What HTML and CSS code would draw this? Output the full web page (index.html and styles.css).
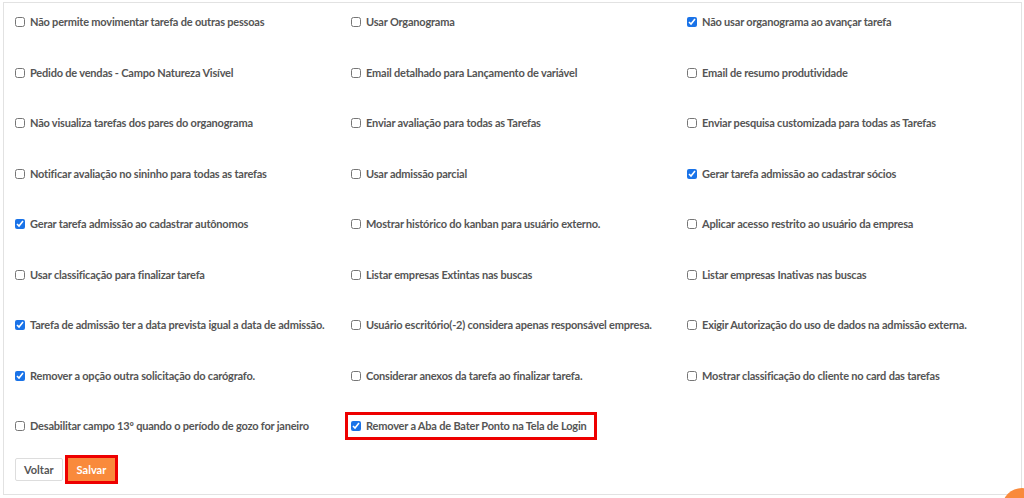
FILE: index.html
```html
<!DOCTYPE html>
<html lang="pt-BR">
<head>
    <meta charset="UTF-8">
    <meta name="viewport" content="width=device-width, initial-scale=1.0">
    <title>Configurações</title>
    <link rel="stylesheet" href="styles.css">
</head>
<body>

    <div class="panel">
        <div class="options">
            <label class="option"><input type="checkbox"> Não permite movimentar tarefa de outras pessoas</label>
            <label class="option"><input type="checkbox"> Usar Organograma</label>
            <label class="option"><input type="checkbox" checked> Não usar organograma ao avançar tarefa</label>

            <label class="option"><input type="checkbox"> Pedido de vendas - Campo Natureza Visível</label>
            <label class="option"><input type="checkbox"> Email detalhado para Lançamento de variável</label>
            <label class="option"><input type="checkbox"> Email de resumo produtividade</label>

            <label class="option"><input type="checkbox"> Não visualiza tarefas dos pares do organograma</label>
            <label class="option"><input type="checkbox"> Enviar avaliação para todas as Tarefas</label>
            <label class="option"><input type="checkbox"> Enviar pesquisa customizada para todas as Tarefas</label>

            <label class="option"><input type="checkbox"> Notificar avaliação no sininho para todas as tarefas</label>
            <label class="option"><input type="checkbox"> Usar admissão parcial</label>
            <label class="option"><input type="checkbox" checked> Gerar tarefa admissão ao cadastrar sócios</label>

            <label class="option"><input type="checkbox" checked> Gerar tarefa admissão ao cadastrar autônomos</label>
            <label class="option"><input type="checkbox"> Mostrar histórico do kanban para usuário externo.</label>
            <label class="option"><input type="checkbox"> Aplicar acesso restrito ao usuário da empresa</label>

            <label class="option"><input type="checkbox"> Usar classificação para finalizar tarefa</label>
            <label class="option"><input type="checkbox"> Listar empresas Extintas nas buscas</label>
            <label class="option"><input type="checkbox"> Listar empresas Inativas nas buscas</label>

            <label class="option"><input type="checkbox" checked> Tarefa de admissão ter a data prevista igual a data de admissão.</label>
            <label class="option"><input type="checkbox"> Usuário escritório(-2) considera apenas responsável empresa.</label>
            <label class="option"><input type="checkbox"> Exigir Autorização do uso de dados na admissão externa.</label>

            <label class="option"><input type="checkbox" checked> Remover a opção outra solicitação do carógrafo.</label>
            <label class="option"><input type="checkbox"> Considerar anexos da tarefa ao finalizar tarefa.</label>
            <label class="option"><input type="checkbox"> Mostrar classificação do cliente no card das tarefas</label>

            <label class="option"><input type="checkbox"> Desabilitar campo 13º quando o período de gozo for janeiro</label>
            <div class="option"><label class="highlight"><input type="checkbox" checked> Remover a Aba de Bater Ponto na Tela de Login</label></div>
        </div>

        <div class="actions">
            <button type="button" class="btn">Voltar</button>
            <button type="button" class="btn btn-save">Salvar</button>
        </div>
    </div>

    <div class="fab"></div>

</body>
</html>
```

FILE: styles.css
```css
body {
    margin: 0;
    background-color: #ffffff;
    font-family: Lato, sans-serif;
    overflow: hidden;
}

.panel {
    margin: 2px 2px 0 3px;
    height: 493px;
    box-sizing: border-box;
    border: 1px solid #e2e2e2;
    padding: 0 11px;
}

.options {
    display: grid;
    grid-template-columns: repeat(3, 336px);
    grid-auto-rows: 50.5px;
}

.option {
    display: flex;
    align-items: flex-start;
    padding-top: 11px;
    font-size: 11px;
    font-weight: 700;
    letter-spacing: -0.2px;
    line-height: 16px;
    color: #555555;
    white-space: nowrap;
}

.option input {
    width: 10px;
    height: 10px;
    margin: 3px 5px 0 0;
    accent-color: #1a73e8;
}

.highlight {
    display: flex;
    align-items: flex-start;
    outline: 3px solid #ee0000;
    outline-offset: 3px;
    padding-right: 4px;
}

.actions {
    display: flex;
    gap: 5px;
}

.btn {
    height: 23px;
    padding: 0 8px;
    font-family: Lato, sans-serif;
    font-size: 11px;
    font-weight: 700;
    color: #555555;
    background-color: #ffffff;
    border: 1px solid #dddddd;
    border-radius: 2px;
}

.btn-save {
    color: #ffffff;
    background-color: #f98a3c;
    border-color: #f98a3c;
    border-radius: 0;
    outline: 3px solid #ee0000;
}

.fab {
    position: fixed;
    right: -18px;
    bottom: -30px;
    width: 40px;
    height: 40px;
    border-radius: 50%;
    background-color: #f98a3c;
}
```
